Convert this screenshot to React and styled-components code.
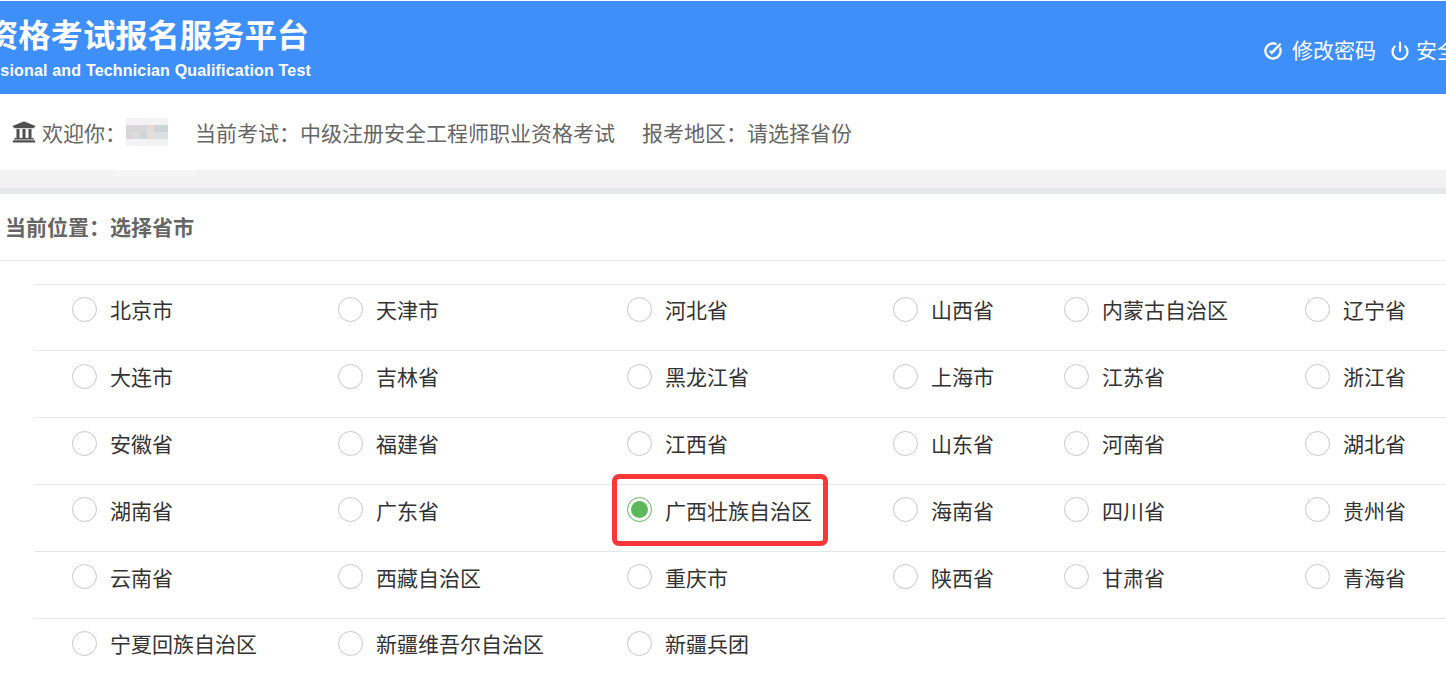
import React from 'react';
import styled, { createGlobalStyle } from 'styled-components';
import { Power } from 'lucide-react';
import { FaUniversity } from 'react-icons/fa';

const GlobalStyle = createGlobalStyle`
  html, body {
    margin: 0;
    padding: 0;
    background: #fff;
    overflow: hidden;
  }
  body {
    font-family: "Liberation Sans", "Noto Sans CJK SC", sans-serif;
  }
`;

const Page = styled.div`
  width: 1446px;
  height: 675px;
  overflow: hidden;
`;

const Header = styled.header`
  display: flex;
  justify-content: space-between;
  height: 93px;
  margin-top: 1px;
  background: #3f8ffb;
  color: #fff;
  overflow: hidden;
`;

const Brand = styled.div`
  display: flex;
  flex-direction: column;
  align-items: flex-end;
  width: 311px;
  overflow: hidden;
  white-space: nowrap;
`;

const BrandTitle = styled.div`
  margin: 15px 2px 0 0;
  font-size: 32.3px;
  line-height: 40px;
  font-weight: 700;
`;

const BrandSub = styled.div`
  margin-top: 5px;
  font-size: 16px;
  line-height: 19px;
  font-weight: 700;
  letter-spacing: 0.18px;
`;

const HeaderLinks = styled.div`
  display: flex;
  align-items: center;
  box-sizing: border-box;
  width: 182px;
  height: 93px;
  padding-top: 7px;
  overflow: hidden;
  white-space: nowrap;
  flex-shrink: 0;
`;

const HeaderLink = styled.span`
  display: inline-flex;
  align-items: center;
  gap: ${p => p.$iconGap}px;
  margin-right: ${p => p.$gap || 0}px;
  font-size: 21px;
  line-height: 28px;
`;

const InfoBar = styled.div`
  display: flex;
  align-items: center;
  height: 76px;
  padding-left: 12px;
  color: #666;
  font-size: 21px;
  white-space: nowrap;
`;

const InfoItem = styled.span`
  margin-right: ${p => p.$gap}px;
`;

const BankIcon = styled(FaUniversity)`
  width: 24px;
  height: 24px;
  margin-right: 6px;
  color: #4f4f4f;
`;

const BlurName = styled.span`
  display: inline-block;
  width: 42px;
  height: 28px;
  margin-right: 27px;
  background:
    linear-gradient(90deg, #d8d6d6 0 14px, #d5d8da 14px 21px, #e6dbd8 21px 28px, #cfd4d6 28px 42px) 0 7px / 42px 7px no-repeat,
    linear-gradient(90deg, #d8d6d6 0 7px, #dedcdc 7px 14px, #d0d5d8 14px 21px, #e3dedc 21px 28px, #dbdfe2 28px 42px) 0 14px / 42px 7px no-repeat,
    linear-gradient(90deg, #f5f4f4, #f3f2f2);
`;

const GreyBand = styled.div`
  position: relative;
  height: 18px;
  background: #f2f2f2;
  border-bottom: 6px solid #e6e9ec;

  &::before {
    content: '';
    position: absolute;
    left: 113px;
    top: 0;
    width: 85px;
    height: 6px;
    background: #f6f6f6;
  }
`;

const HeadingRow = styled.div`
  display: flex;
  align-items: center;
  box-sizing: border-box;
  height: 67px;
  padding: 0 0 3px 5px;
  border-bottom: 1px solid #e7e7e7;
  color: #666;
  font-size: 21px;
  font-weight: 700;
`;

const Table = styled.div`
  margin: 22.6px 0 0 34px;
`;

const Row = styled.div`
  display: grid;
  grid-template-columns: 266px 289px 266px 171px 241px 1fr;
  align-items: center;
  height: 66.8px;
  box-sizing: border-box;
  padding: 0 0 16px 38px;
  border-top: 1px solid #e7e7e7;
`;

const Option = styled.label`
  position: relative;
  display: flex;
  align-items: center;
  gap: 13px;
  color: #333;
  font-size: 21px;
  white-space: nowrap;
`;

const Radio = styled.span`
  display: flex;
  align-items: center;
  justify-content: center;
  box-sizing: border-box;
  width: 25px;
  height: 25px;
  border-radius: 50%;
  background: #fff;
  border: 1px solid ${p => (p.$checked ? '#5cb85c' : '#c8c8c8')};

  &::after {
    content: '';
    display: ${p => (p.$checked ? 'block' : 'none')};
    width: 17px;
    height: 17px;
    border-radius: 50%;
    background: #5cb85c;
  }
`;

const Highlight = styled.span`
  position: absolute;
  left: -15px;
  top: -21px;
  width: 216px;
  height: 72px;
  box-sizing: border-box;
  border: 5px solid #fb3737;
  border-radius: 7px;
  pointer-events: none;
`;

const rows = [
  ['北京市', '天津市', '河北省', '山西省', '内蒙古自治区', '辽宁省'],
  ['大连市', '吉林省', '黑龙江省', '上海市', '江苏省', '浙江省'],
  ['安徽省', '福建省', '江西省', '山东省', '河南省', '湖北省'],
  ['湖南省', '广东省', '广西壮族自治区', '海南省', '四川省', '贵州省'],
  ['云南省', '西藏自治区', '重庆市', '陕西省', '甘肃省', '青海省'],
  ['宁夏回族自治区', '新疆维吾尔自治区', '新疆兵团'],
];

const selected = '广西壮族自治区';

function EditCircle() {
  return (
    <svg width="18" height="18" viewBox="0 0 18 18" fill="none" stroke="#fff" strokeWidth="2.4" strokeLinecap="round">
      <path d="M11.6 1.8A7.6 7.6 0 1 0 16.2 6.6" />
      <path d="M6.6 9.6 7.8 10.8 16 2.4" />
    </svg>
  );
}

export default function App() {
  return (
    <Page>
      <GlobalStyle />
      <Header>
        <Brand>
          <BrandTitle>资格考试报名服务平台</BrandTitle>
          <BrandSub>Professional and Technician Qualification Test</BrandSub>
        </Brand>
        <HeaderLinks>
          <HeaderLink $gap={14} $iconGap={10}>
            <EditCircle />
            修改密码
          </HeaderLink>
          <HeaderLink $iconGap={6}>
            <Power size={20} strokeWidth={2.6} />
            安全退出
          </HeaderLink>
        </HeaderLinks>
      </Header>
      <InfoBar>
        <BankIcon />
        <InfoItem $gap={0}>欢迎你{'\uFF1A'}</InfoItem>
        <BlurName />
        <InfoItem $gap={27}>当前考试{'\uFF1A'}中级注册安全工程师职业资格考试</InfoItem>
        <InfoItem $gap={0}>报考地区{'\uFF1A'}请选择省份</InfoItem>
      </InfoBar>
      <GreyBand />
      <HeadingRow>当前位置{'\uFF1A'}选择省市</HeadingRow>
      <Table>
        {rows.map(row => (
          <Row key={row[0]}>
            {row.map(name => (
              <Option key={name}>
                <Radio $checked={name === selected} />
                {name}
                {name === selected && <Highlight />}
              </Option>
            ))}
          </Row>
        ))}
      </Table>
    </Page>
  );
}
